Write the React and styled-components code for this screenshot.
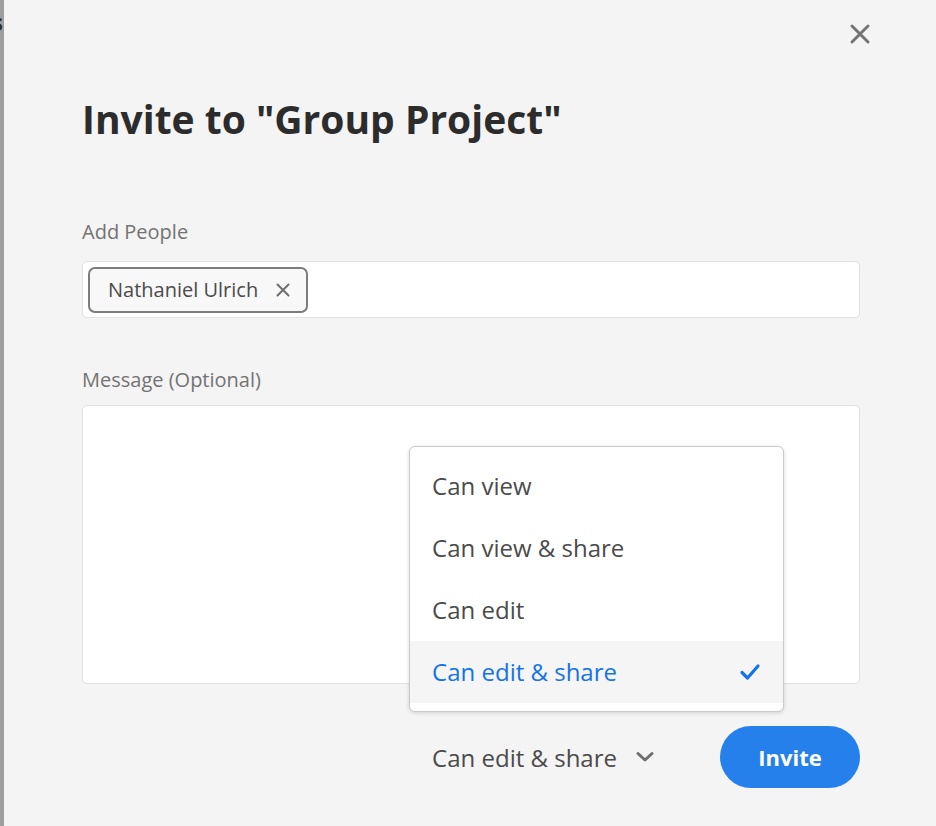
import styled, { createGlobalStyle } from "styled-components";

const GlobalStyle = createGlobalStyle`
  html, body {
    margin: 0;
    padding: 0;
    background: #f4f4f4;
  }
  * {
    box-sizing: border-box;
  }
`;

const Page = styled.div`
  display: flex;
  width: 936px;
  height: 826px;
  overflow: hidden;
  font-family: "Open Sans", "Noto Sans", sans-serif;
`;

const BackdropEdge = styled.div`
  width: 4px;
  flex-shrink: 0;
  background: #9e9e9e;
  overflow: hidden;
  padding-top: 10px;
`;

const EdgeGlyph = styled.span`
  display: block;
  margin-left: -9px;
  font-size: 24px;
  font-weight: 700;
  line-height: 1;
  color: #2c2c2c;
`;

const Dialog = styled.div`
  flex: 1;
  display: flex;
  flex-direction: column;
  padding: 22px 76px 0 78px;
`;

const CloseRow = styled.div`
  display: flex;
  justify-content: flex-end;
  margin-right: -12px;
`;

const CloseButton = styled.button`
  width: 24px;
  height: 24px;
  padding: 0;
  border: none;
  background: none;
  display: flex;
  align-items: center;
  justify-content: center;
  cursor: pointer;
`;

const Title = styled.h1`
  margin: 46px 0 0;
  font-size: 39px;
  font-weight: 700;
  line-height: 54px;
  color: #2c2c2c;
`;

const FieldLabel = styled.div`
  margin-top: ${(p) => p.$gap}px;
  font-size: 20px;
  line-height: 28px;
  color: #737373;
`;

const TagInput = styled.div`
  margin-top: 15px;
  height: 57px;
  background: #fff;
  border: 1px solid #e1e1e1;
  border-radius: 5px;
  padding: 4px 5px;
  display: flex;
  align-items: center;
`;

const Tag = styled.div`
  display: flex;
  align-items: center;
  gap: 18px;
  height: 46px;
  padding: 0 16px 0 18px;
  border: 2px solid #7c7c7c;
  border-radius: 7px;
  background: #f8f8f8;
  font-size: 20px;
  color: #4b4b4b;
`;

const MessageBox = styled.div`
  margin-top: 11px;
  height: 279px;
  background: #fff;
  border: 1px solid #e1e1e1;
  border-radius: 5px;
`;

const Footer = styled.div`
  margin-top: 42px;
  display: flex;
  justify-content: flex-end;
  align-items: center;
  gap: 65px;
`;

const Picker = styled.div`
  position: relative;
  display: flex;
  align-items: center;
  gap: 18px;
  font-size: 24px;
  line-height: 33px;
  color: #4b4b4b;
  cursor: pointer;
`;

const Menu = styled.ul`
  position: absolute;
  left: -23px;
  bottom: 62px;
  width: 375px;
  margin: 0;
  padding: 8px 0;
  list-style: none;
  background: #fff;
  border: 1px solid #cacaca;
  border-radius: 6px;
  box-shadow: 0 1px 4px rgba(0, 0, 0, 0.15);
`;

const MenuItem = styled.li`
  display: flex;
  align-items: center;
  justify-content: space-between;
  height: 62px;
  padding: 0 22px;
  font-size: 24px;
  color: ${(p) => (p.$selected ? "#1473e6" : "#4b4b4b")};
  background: ${(p) => (p.$selected ? "#f5f5f5" : "transparent")};
`;

const InviteButton = styled.button`
  width: 140px;
  height: 62px;
  border: none;
  border-radius: 31px;
  background: #2680eb;
  color: #fff;
  font-family: inherit;
  font-size: 22px;
  font-weight: 700;
  cursor: pointer;
`;

const options = ["Can view", "Can view & share", "Can edit", "Can edit & share"];

export default function App() {
  const selected = "Can edit & share";
  return (
    <>
      <GlobalStyle />
      <Page>
        <BackdropEdge>
          <EdgeGlyph>s</EdgeGlyph>
        </BackdropEdge>
        <Dialog>
          <CloseRow>
            <CloseButton aria-label="Close">
              <svg width="22" height="22" viewBox="0 0 22 22">
                <path d="M3 3 L19 19 M19 3 L3 19" stroke="#747474" strokeWidth="3" strokeLinecap="round" />
              </svg>
            </CloseButton>
          </CloseRow>
          <Title>Invite to "Group Project"</Title>

          <FieldLabel $gap={72}>Add People</FieldLabel>
          <TagInput>
            <Tag>
              Nathaniel Ulrich
              <svg width="14" height="14" viewBox="0 0 14 14">
                <path d="M1.5 1.5 L12.5 12.5 M12.5 1.5 L1.5 12.5" stroke="#6e6e6e" strokeWidth="2" strokeLinecap="round" />
              </svg>
            </Tag>
          </TagInput>

          <FieldLabel $gap={48}>Message (Optional)</FieldLabel>
          <MessageBox />

          <Footer>
            <Picker>
              {selected}
              <svg width="20" height="12" viewBox="0 0 20 12">
                <path d="M3 2.5 L10 9 L17 2.5" fill="none" stroke="#6e6e6e" strokeWidth="3" strokeLinecap="round" strokeLinejoin="round" />
              </svg>
              <Menu>
                {options.map((o) => (
                  <MenuItem key={o} $selected={o === selected}>
                    {o}
                    {o === selected && (
                      <svg width="22" height="18" viewBox="0 0 22 18">
                        <path d="M3 9.5 L8.5 15 L19 3" fill="none" stroke="#1473e6" strokeWidth="3.2" strokeLinecap="round" strokeLinejoin="round" />
                      </svg>
                    )}
                  </MenuItem>
                ))}
              </Menu>
            </Picker>
            <InviteButton>Invite</InviteButton>
          </Footer>
        </Dialog>
      </Page>
    </>
  );
}
